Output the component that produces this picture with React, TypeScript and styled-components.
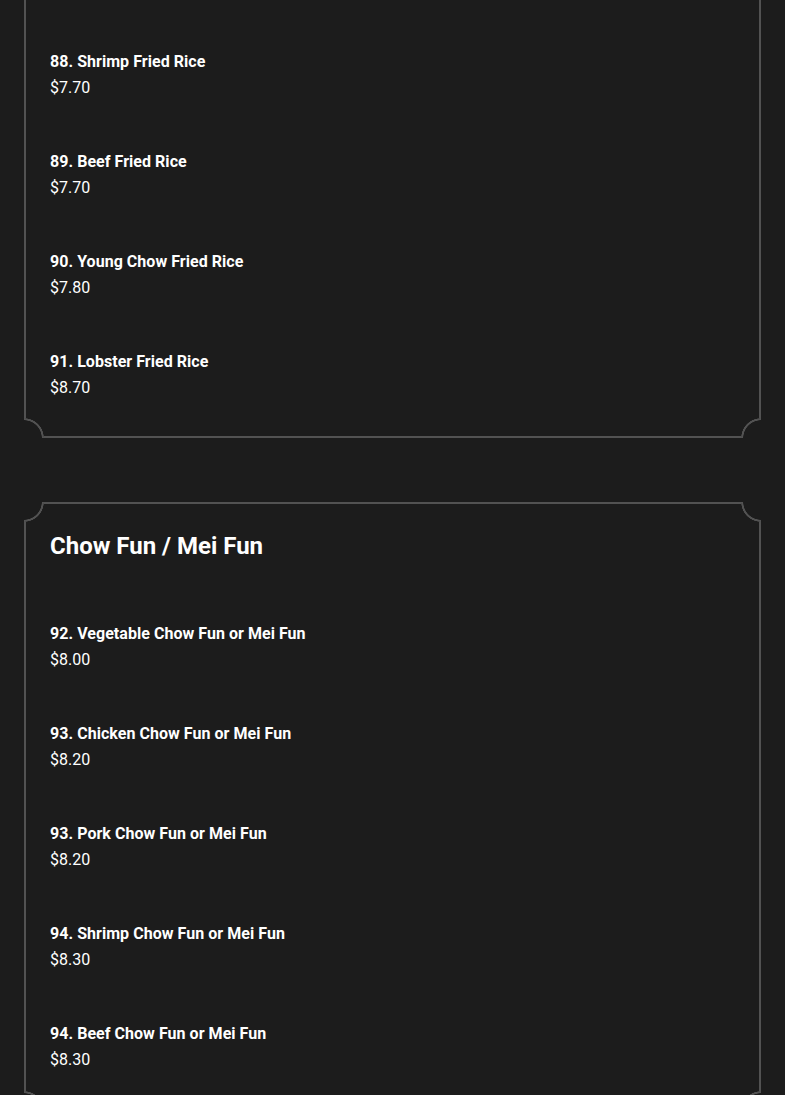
import styled, { createGlobalStyle } from 'styled-components'

const PAGE_BG = '#1c1c1c'
const LINE = '#525252'

const GlobalStyle = createGlobalStyle`
    html, body {
        margin: 0;
        padding: 0;
        background: ${PAGE_BG};
    }
    body {
        font-family: Roboto, 'Liberation Sans', sans-serif;
        color: #ffffff;
    }
`

const Page = styled.div`
    display: flex;
    flex-direction: column;
    gap: 64px;
    padding: 0 24px;
`

const Card = styled.section<{ clipped?: boolean }>`
    position: relative;
    border: 2px solid ${LINE};
    border-top: ${({ clipped }) => (clipped ? 'none' : `2px solid ${LINE}`)};
    padding: ${({ clipped }) => (clipped ? '49px 24px 35px' : '26px 24px 36px')};
`

type CornerPos = 'tl' | 'tr' | 'bl' | 'br'

const cornerAt: Record<CornerPos, string> = {
    tl: '0 0',
    tr: '100% 0',
    bl: '0 100%',
    br: '100% 100%',
}

// scalloped corner drawn over the card border
const Corner = styled.span<{ pos: CornerPos }>`
    position: absolute;
    width: 20px;
    height: 20px;
    ${({ pos }) => (pos[0] === 't' ? 'top: -2px;' : 'bottom: -2px;')}
    ${({ pos }) => (pos[1] === 'l' ? 'left: -2px;' : 'right: -2px;')}
    background: radial-gradient(
        circle at ${({ pos }) => cornerAt[pos]},
        ${PAGE_BG} 0 17.5px,
        ${LINE} 18px 19.5px,
        ${PAGE_BG} 20px
    );
`

const Heading = styled.h2`
    margin: 0 0 59px;
    font-size: 24px;
    line-height: 32px;
    font-weight: 700;
`

const ItemList = styled.div`
    display: flex;
    flex-direction: column;
    gap: 48px;
`

const Item = styled.div`
    display: flex;
    flex-direction: column;
`

const ItemName = styled.div`
    font-size: 16px;
    line-height: 26px;
    font-weight: 700;
    letter-spacing: 0.04px;
`

const Price = styled.div`
    font-size: 16px;
    line-height: 26px;
    font-weight: 400;
`

interface MenuItem {
    name: string
    price: string
}

const friedRice: MenuItem[] = [
    { name: '88. Shrimp Fried Rice', price: '$7.70' },
    { name: '89. Beef Fried Rice', price: '$7.70' },
    { name: '90. Young Chow Fried Rice', price: '$7.80' },
    { name: '91. Lobster Fried Rice', price: '$8.70' },
]

const chowFun: MenuItem[] = [
    { name: '92. Vegetable Chow Fun or Mei Fun', price: '$8.00' },
    { name: '93. Chicken Chow Fun or Mei Fun', price: '$8.20' },
    { name: '93. Pork Chow Fun or Mei Fun', price: '$8.20' },
    { name: '94. Shrimp Chow Fun or Mei Fun', price: '$8.30' },
    { name: '94. Beef Chow Fun or Mei Fun', price: '$8.30' },
]

function Items({ items }: { items: MenuItem[] }) {
    return (
        <ItemList>
            {items.map((item) => (
                <Item key={item.name}>
                    <ItemName>{item.name}</ItemName>
                    <Price>{item.price}</Price>
                </Item>
            ))}
        </ItemList>
    )
}

export default function App() {
    return (
        <>
            <GlobalStyle />
            <Page>
                <Card clipped>
                    <Items items={friedRice} />
                    <Corner pos="bl" />
                    <Corner pos="br" />
                </Card>
                <Card>
                    <Heading>Chow Fun / Mei Fun</Heading>
                    <Items items={chowFun} />
                    <Corner pos="tl" />
                    <Corner pos="tr" />
                    <Corner pos="bl" />
                    <Corner pos="br" />
                </Card>
            </Page>
        </>
    )
}
